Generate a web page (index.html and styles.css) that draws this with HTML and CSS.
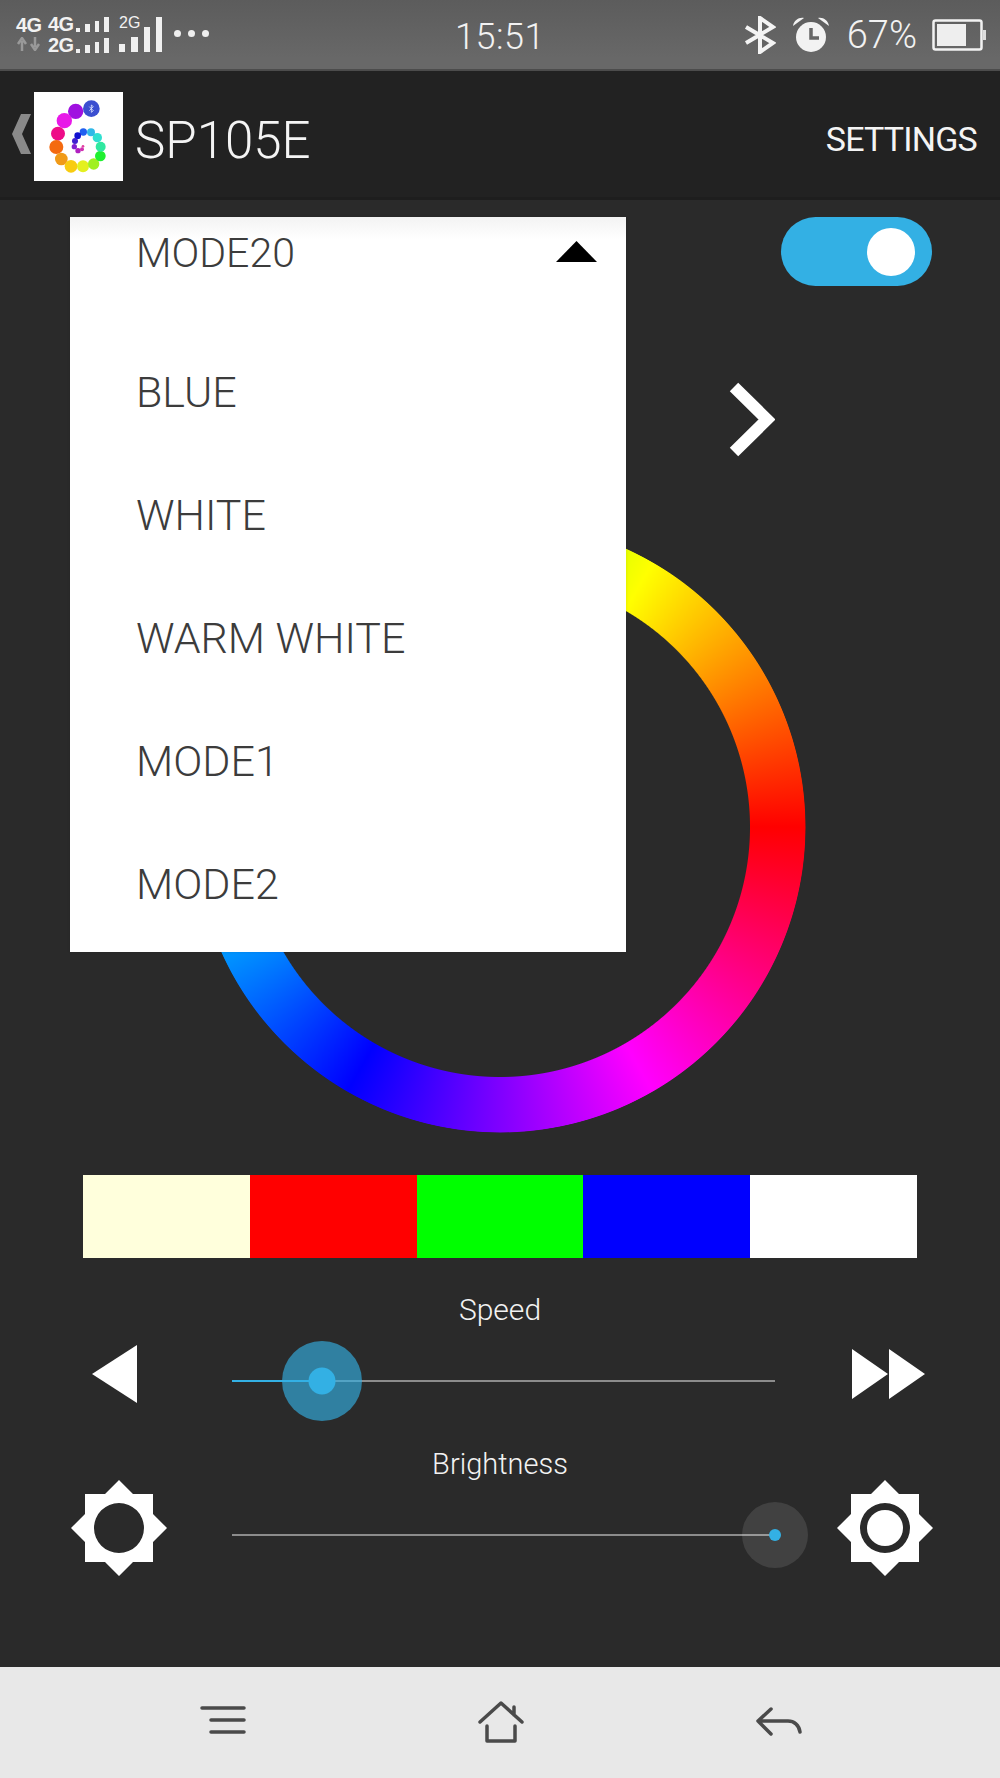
FILE: index.html
```html
<!DOCTYPE html>
<html lang="en">
<head>
<meta charset="utf-8">
<title>SP105E</title>
<link rel="stylesheet" href="styles.css">
</head>
<body>
<div class="phone">
  <header class="status">
    <div class="status-left">
      <div class="sim-col">
        <span class="sim-label">4G</span>
        <svg class="arrows" viewBox="0 0 25 14"><path d="M6 14V4M2 7l4-6 4 6M19 0v10M15 7l4 6 4-6" fill="none" stroke="#999" stroke-width="2.500"/></svg>
      </div>
      <div class="sim-col sim-col-bars">
        <div class="sim-row"><span class="sim-label">4G</span><svg class="mini-bars" viewBox="0 0 33 15"><path fill="#f0f0f0" d="M0 11h4v4H0zM9 7h5v8H9zM19 4h4v11h-4zM28 0h5v15h-5z"/></svg></div>
        <div class="sim-row"><span class="sim-label">2G</span><svg class="mini-bars" viewBox="0 0 33 15"><path fill="#f0f0f0" d="M0 11h4v4H0zM9 7h5v8H9zM19 4h4v11h-4zM28 0h5v15h-5z"/></svg></div>
      </div>
      <div class="big-signal">
        <span class="sim-small">2G</span>
        <svg class="big-bars" viewBox="0 0 43 35"><path fill="#f0f0f0" d="M0 27h6v8H0zM12 20h7v15h-7zM25 10h6v25h-6zM37 0h6v35h-6z"/></svg>
      </div>
      <div class="more"><i></i><i></i><i></i></div>
    </div>
    <div class="clock">15:51</div>
    <div class="status-right">
      <svg class="bt" viewBox="0 0 32 38"><path d="M2 11l27 16-13 9V2l13 9L2 27" fill="none" stroke="#f4f4f4" stroke-width="4"/></svg>
      <svg class="alarm" viewBox="0 0 38 36"><path fill="#f2f2f2" d="M1 9C2 3 7 0 12 1zM37 9C36 3 31 0 26 1z"/><circle cx="19" cy="20" r="15" fill="#f2f2f2"/><path d="M19 11v10h8" fill="none" stroke="#666" stroke-width="3.500"/></svg>
      <span class="percent">67%</span>
      <svg class="battery" viewBox="0 0 54 32"><rect x="1.500" y="1.500" width="48" height="29" rx="2" fill="none" stroke="#f2f2f2" stroke-width="2.500"/><rect x="5" y="5" width="29" height="22" fill="#eee"/><rect x="51" y="11" width="3" height="10" fill="#ddd"/></svg>
    </div>
  </header>

  <div class="appbar">
    <svg class="back" viewBox="0 0 20 40"><path fill="#8a8a8a" d="M9 0h10L10 20l9 20H9L0 20z"/></svg>
    <div class="logo">
      <svg viewBox="103 275 267 267">
        <circle cx="228" cy="333" r="23" fill="#a010e0"/><circle cx="194" cy="361" r="23" fill="#e818e8"/>
        <circle cx="175" cy="400" r="21" fill="#ee0c88"/><circle cx="170" cy="440" r="21" fill="#f46a10"/>
        <circle cx="185" cy="476" r="19" fill="#f09a18"/><circle cx="214" cy="498" r="19" fill="#f8cc10"/>
        <circle cx="250" cy="498" r="18" fill="#e4f020"/><circle cx="282" cy="491" r="17" fill="#a0f020"/>
        <circle cx="302" cy="467" r="16" fill="#20f030"/><circle cx="303" cy="439" r="15" fill="#30e8a0"/>
        <circle cx="293" cy="412" r="14" fill="#30e0d0"/><circle cx="274" cy="396" r="12" fill="#30b8e8"/>
        <circle cx="251" cy="395" r="11" fill="#2060f0"/><circle cx="234" cy="406" r="10" fill="#1010d0"/>
        <circle cx="226" cy="422" r="9" fill="#4020d0"/><circle cx="224" cy="439" r="8" fill="#8020d0"/>
        <circle cx="235" cy="451" r="8" fill="#b020c0"/><circle cx="247" cy="447" r="6" fill="#d030b0"/>
        <circle cx="250" cy="438" r="4" fill="#e040a0"/>
        <circle cx="275" cy="325" r="25" fill="#3b4fd0"/>
        <path d="M269 319l12 12-6 5v-22l6 5-12 12" fill="none" stroke="#dfe4ff" stroke-width="2.500"/>
      </svg>
    </div>
    <h1 class="title">SP105E</h1>
    <span class="settings">SETTINGS</span>
  </div>

  <main class="main">
    <div class="dropdown">
      <div class="dropdown-head">
        <span class="dropdown-value">MODE20</span>
        <svg class="caret" viewBox="0 0 41 21"><path d="M20.500 0L41 21H0z" fill="#000"/></svg>
      </div>
      <ul class="dropdown-list">
        <li>BLUE</li>
        <li>WHITE</li>
        <li>WARM WHITE</li>
        <li>MODE1</li>
        <li>MODE2</li>
      </ul>
    </div>

    <div class="toggle-row"><div class="toggle"><span class="knob"></span></div></div>
    <div class="next-row">
      <svg class="next" viewBox="0 0 46 75"><path d="M5 5l33 32.500L5 70" fill="none" stroke="#fff" stroke-width="12"/></svg>
    </div>
    <div class="ring"></div>
    <div class="swatches">
      <span class="sw sw-warm"></span><span class="sw sw-red"></span><span class="sw sw-green"></span><span class="sw sw-blue"></span><span class="sw sw-white"></span>
    </div>

    <div class="ctl-label ctl-label-speed">Speed</div>
    <div class="ctl-row">
      <svg class="ico-slow" viewBox="0 0 45 58"><path d="M0 29L45 0v58z" fill="#fff"/></svg>
      <div class="slider">
        <span class="fill" style="width:90px"></span>
        <span class="halo halo-blue" style="left:90px"></span>
        <span class="dot dot-big" style="left:90px"></span>
      </div>
      <svg class="ico-fast" viewBox="0 0 73 50"><path d="M0 0l36 25L0 50zM37 0l36 25-36 25z" fill="#fff"/></svg>
    </div>

    <div class="ctl-label ctl-label-bright">Brightness</div>
    <div class="ctl-row">
      <svg class="ico-sun" viewBox="0 0 96 96"><path fill-rule="evenodd" fill="#fff" d="M48 0l14 14h20v20l14 14-14 14v20H62L48 96 34 82H14V62L0 48l14-14V14h20zM48 23a25 25 0 1 0 0 50 25 25 0 0 0 0-50z"/></svg>
      <div class="slider">
        <span class="halo halo-gray" style="left:543px"></span>
        <span class="dot dot-small" style="left:543px"></span>
      </div>
      <svg class="ico-sun ico-sun-right" viewBox="0 0 96 96"><path fill-rule="evenodd" fill="#fff" d="M48 0l14 14h20v20l14 14-14 14v20H62L48 96 34 82H14V62L0 48l14-14V14h20zM48 23a25 25 0 1 0 0 50 25 25 0 0 0 0-50z"/><circle cx="48" cy="48" r="18" fill="#fff"/></svg>
    </div>
  </main>

  <footer class="navbar">
    <svg class="nav-menu" viewBox="0 0 46 30"><path d="M2 2h42M11 14h33M11 26h33" fill="none" stroke="#4a4a4a" stroke-width="3.500" stroke-linecap="round"/></svg>
    <svg class="nav-home" viewBox="0 0 46 42"><path d="M2 21L23 2l21 19M36 6v8M9 25v15h28V25" fill="none" stroke="#4a4a4a" stroke-width="3.500" stroke-linecap="round" stroke-linejoin="round"/></svg>
    <svg class="nav-back" viewBox="0 0 46 30"><path d="M15 2L2 14l13 13M2 14h30c6 0 11 4 12 11" fill="none" stroke="#4a4a4a" stroke-width="3.500" stroke-linecap="round" stroke-linejoin="round"/></svg>
  </footer>
</div>
</body>
</html>
```
FILE: styles.css
```css
* { box-sizing: border-box; }
html, body { margin: 0; padding: 0; }
body { background: #2a2a2a; font-family: Roboto, "Liberation Sans", sans-serif; }
.phone { width: 1000px; height: 1778px; display: flex; flex-direction: column; overflow: hidden; }

/* status bar */
.status {
  height: 71px; flex: none; display: grid; grid-template-columns: 1fr auto 1fr; align-items: center;
  background: linear-gradient(#5c5c5c, #686868 85%); border-bottom: 2px solid #4c4c4c; color: #f2f2f2;
}
.status-left { display: flex; align-items: center; padding-left: 16px; }
.sim-col { display: flex; flex-direction: column; width: 25px; gap: 4px; }
.sim-col-bars { width: 60px; margin-left: 7px; gap: 6px; }
.sim-row { display: flex; align-items: flex-end; gap: 3px; height: 15px; }
.sim-label { font: bold 20px/15px "Liberation Sans", sans-serif; letter-spacing: -.7px; width: 25px; flex: none; }
.arrows { width: 25px; height: 14px; display: block; }
.mini-bars { width: 33px; height: 15px; display: block; flex: none; }
.big-signal { position: relative; width: 43px; height: 35px; margin-left: 11px; }
.sim-small { position: absolute; left: 0; top: -1px; font: 16px/14px "Liberation Sans", sans-serif; }
.big-bars { width: 43px; height: 35px; display: block; }
.more { display: flex; gap: 7px; margin-left: 12px; margin-top: -3px; }
.more i { width: 7px; height: 7px; border-radius: 50%; background: #eee; }
.clock { font-size: 36px; font-weight: 300; line-height: 1; letter-spacing: .5px; padding-top: 4px; }
.status-right { display: flex; align-items: center; justify-content: flex-end; padding-right: 14px; }
.bt { width: 32px; height: 38px; }
.alarm { width: 38px; height: 36px; margin-left: 16px; }
.percent { font-size: 38px; font-weight: 300; line-height: 1; margin-left: 17px; }
.battery { width: 54px; height: 32px; margin-left: 15px; }

/* app bar */
.appbar { height: 129px; flex: none; display: flex; align-items: center; background: #222; border-bottom: 3px solid #1e1e1e; position: relative; padding-left: 12px; padding-right: 23px; }
.back { width: 20px; height: 40px; flex: none; margin-top: 0; }
.logo { width: 89px; height: 89px; background: #fff; margin-left: 2px; margin-top: 5px; flex: none; }
.logo svg { width: 89px; height: 89px; display: block; }
.title { margin: 12px 0 0 12px; font-size: 51px; font-weight: 300; color: #f4f4f4; line-height: 1; flex: 1; }
.settings { font-size: 34px; font-weight: 400; letter-spacing: -.8px; color: #f4f4f4; margin-top: 10px; }

/* main */
.main { flex: 1; position: relative; background: #2a2a2a; display: flex; flex-direction: column; }
.dropdown { position: absolute; left: 70px; top: 17px; width: 556px; height: 735px; background: #fff; box-shadow: 0 0 3px rgba(0,0,0,.12); color: #3c3c3c; font-size: 43px; font-weight: 300; z-index: 2; }
.dropdown-head { height: 76px; display: flex; align-items: center; justify-content: space-between; padding: 0 29px 0 66px; background: linear-gradient(#f3f3f3, #fff 30%); }
.dropdown-value { font-size: 41px; margin-top: -4px; }
.caret { width: 41px; height: 21px; margin-top: -8px; }
.dropdown-list { list-style: none; margin: 0; padding: 38px 0 0 66px; }
.dropdown-list li { height: 123px; line-height: 123px; }

.toggle-row { display: flex; justify-content: flex-end; padding: 17px 68px 0 0; }
.toggle { width: 151px; height: 69px; border-radius: 35px; background: #33b0e4; display: flex; align-items: center; justify-content: flex-end; padding-right: 17px; }
.knob { width: 48px; height: 48px; border-radius: 50%; background: #fff; }
.next-row { display: flex; justify-content: flex-end; padding: 96px 225px 0 0; }
.next { width: 46px; height: 75px; display: block; }
.ring {
  width: 612px; height: 612px; margin: 64px auto 0; border-radius: 50%; flex: none;
  background: conic-gradient(from 90deg, #f00, #f0f, #00f, #0ff, #0f0, #ff0, #f00);
  -webkit-mask: radial-gradient(circle, transparent 249.5px, #000 250.5px, #000 305px, transparent 306px);
  mask: radial-gradient(circle, transparent 249.5px, #000 250.5px, #000 305px, transparent 306px);
}
.swatches { display: grid; grid-template-columns: repeat(5, 1fr); width: 834px; height: 83px; margin: 42px auto 0; flex: none; }
.sw-warm { background: #ffffdc; } .sw-red { background: #f00; } .sw-green { background: #0f0; } .sw-blue { background: #00f; } .sw-white { background: #fff; }

.ctl-label { text-align: center; color: #f2f2f2; font-size: 30px; font-weight: 300; line-height: 40px; }
.ctl-label-speed { margin-top: 32px; margin-bottom: 6px; }
.ctl-label-bright { font-size: 29px; margin-top: 18px; margin-bottom: 6px; }
.ctl-row { height: 90px; display: grid; grid-template-columns: 232px 543px 1fr; align-items: center; flex: none; }
.slider { position: relative; height: 2px; background: #8c8c8c; }
.fill { position: absolute; left: 0; top: 0; height: 2px; background: #33b0e4; }
.halo, .dot { position: absolute; top: 1px; border-radius: 50%; transform: translate(-50%, -50%); }
.halo-blue { width: 80px; height: 80px; background: rgba(51,176,228,.64); }
.halo-gray { width: 66px; height: 66px; background: rgba(255,255,255,.11); }
.dot { background: #33b0e4; }
.dot-big { width: 27px; height: 27px; }
.dot-small { width: 12px; height: 12px; }
.ico-slow { width: 45px; height: 58px; margin: -14px 0 0 92px; display: block; }
.ico-fast { width: 73px; height: 50px; margin: -14px 0 0 77px; display: block; }
.ico-sun { width: 96px; height: 96px; margin: -14px 0 0 71px; display: block; }
.ico-sun-right { margin-left: 62px; }

/* nav bar */
.navbar { height: 111px; flex: none; background: #e8e8e8; display: grid; grid-template-columns: 200px 46px 232px 46px 234px 46px; align-items: center; padding-bottom: 0; }
.nav-menu { grid-column: 2; width: 46px; height: 30px; margin-top: -3px; }
.nav-home { grid-column: 4; width: 46px; height: 42px; margin-top: -2px; }
.nav-back { grid-column: 6; width: 46px; height: 30px; margin-top: -2px; margin-left: -2px; }
```
